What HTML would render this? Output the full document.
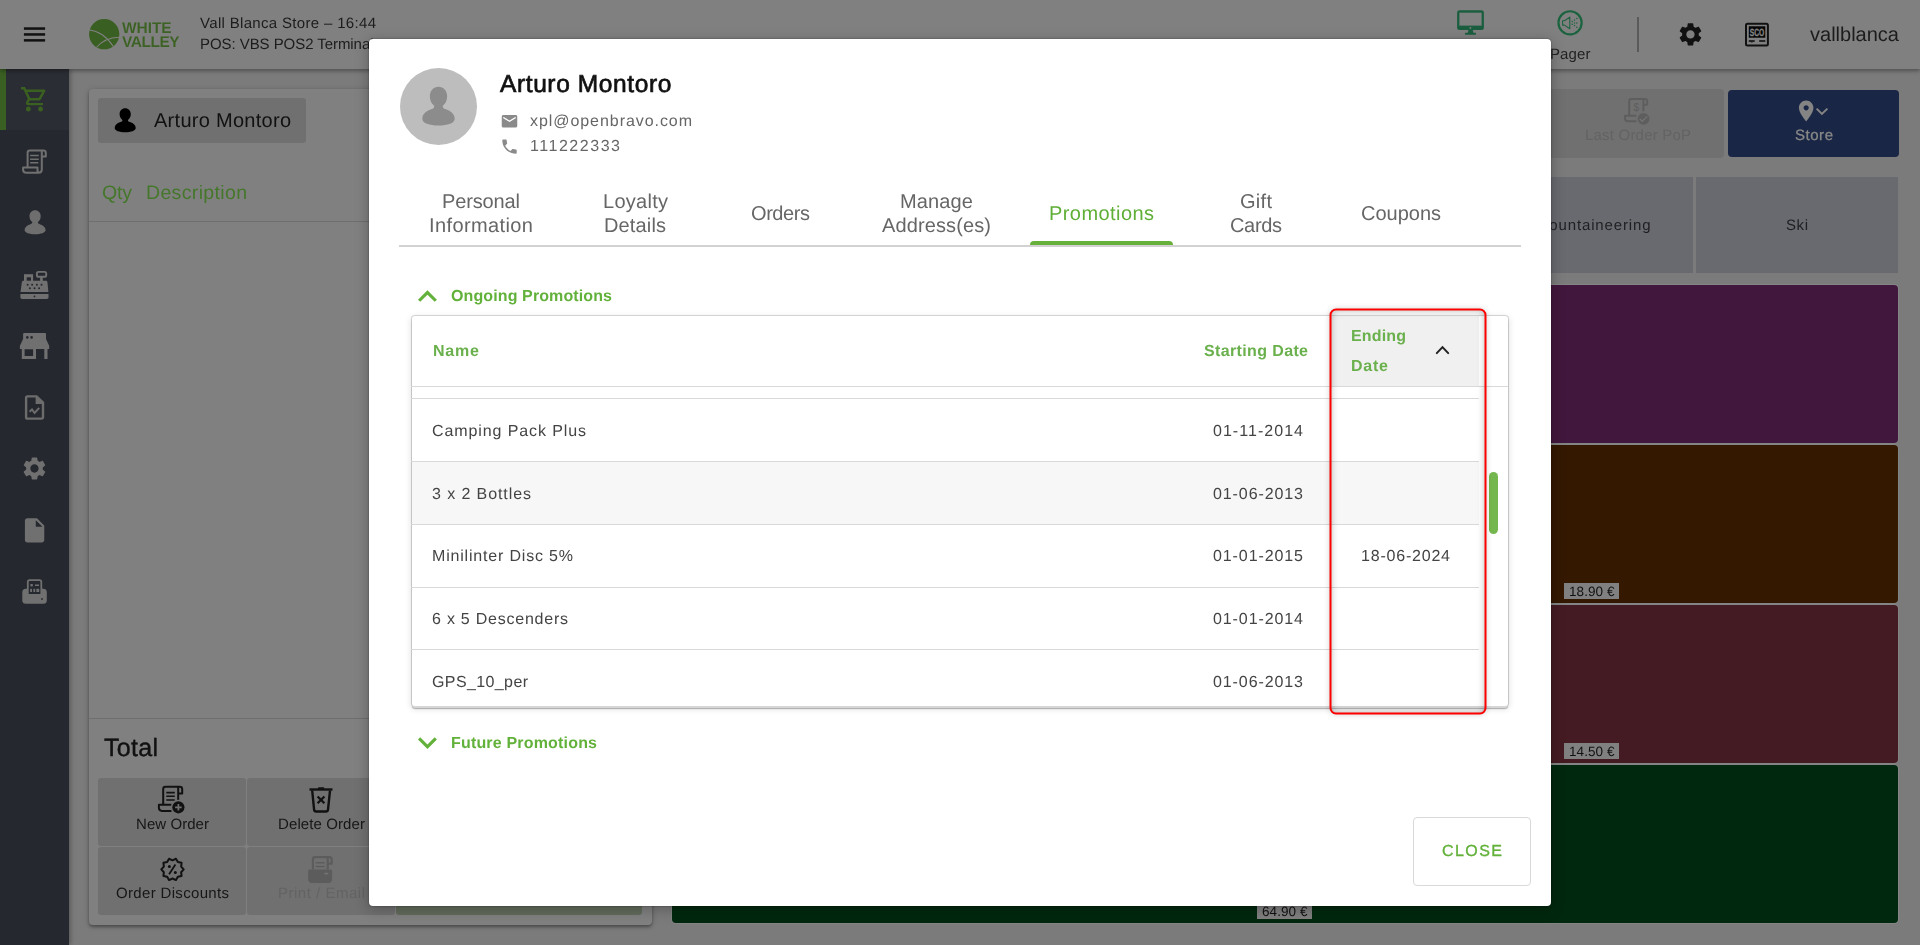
<!DOCTYPE html>
<html lang="en"><head><meta charset="utf-8"><title>POS – Customer Promotions</title>
<style>
*{box-sizing:border-box;margin:0;padding:0}
html,body{width:1920px;height:945px;overflow:hidden;background:#7b7b7b;font-family:"Liberation Sans",sans-serif}
.a{position:absolute}
.t{position:absolute;white-space:nowrap;display:block;text-rendering:geometricPrecision;will-change:transform}
svg{position:absolute;overflow:visible}
#header{left:0;top:0;width:1920px;height:69px;background:#808080;box-shadow:0 2px 4px rgba(0,0,0,.35)}
#side{left:0;top:69px;width:69px;height:876px;background:#25282e;box-shadow:2px 0 4px rgba(0,0,0,.25)}
#side .act{left:0;top:0;width:69px;height:61px;background:#2a2d33}
#side .bar{left:0;top:0;width:6px;height:61px;background:#3a5f22}
#lpanel{left:89px;top:89px;width:563px;height:836px;background:#808080;border-radius:4px;box-shadow:0 2px 3px rgba(0,0,0,.3),0 1px 6px rgba(0,0,0,.18)}
.btn{background:#707070;border-radius:3px}
.hl{background:#6e6e6e;height:1px}
#modal{left:369px;top:39px;width:1182px;height:867px;background:#fff;border-radius:4px;box-shadow:0 0 2px rgba(0,0,0,.45),0 3px 14px 1px rgba(0,0,0,.24)}
.cat{background:#696a70}
.tile{border-radius:4px;box-shadow:0 0 0 1px #838585}
.price{background:#808080;height:16px}
#card{left:412px;top:316px;width:1096px;height:390px;background:#fff;border-radius:3px;box-shadow:0 2px 0 0 #d6d6d6,0 3px 1px 0 rgba(0,0,0,.28),0 0 0 1px rgba(0,0,0,.14),0 2px 6px 1px rgba(0,0,0,.13)}
.rl{background:#d9d9d9;height:1px;left:411px;width:1068px}
#redbox{left:1330px;top:309px;width:156px;height:405px;border-radius:6px;box-shadow:0 0 6px rgba(0,0,0,.2), inset 0 0 8px rgba(0,0,0,.38)}

</style></head>
<body>
<!-- ======= background application (dimmed by modal overlay) ======= -->
<div class="a" id="lpanel"></div>
<div class="a btn" style="left:98px;top:98px;width:208px;height:44.600px"></div>
<div class="a hl" style="left:89px;top:221px;width:563px"></div>
<div class="a hl" style="left:89px;top:718px;width:563px"></div>
<div class="a btn" style="left:98px;top:778px;width:148px;height:68px"></div>
<div class="a btn" style="left:247px;top:778px;width:148px;height:68px"></div>
<div class="a btn" style="left:98px;top:847px;width:148px;height:68px"></div>
<div class="a btn" style="left:247px;top:847px;width:148px;height:68px"></div>
<div class="a" style="left:396px;top:847px;width:246px;height:68px;background:#626b5c;border-radius:3px"></div>

<div class="a btn" style="left:1460px;top:89px;width:264px;height:68.500px;background:#707070;border-radius:4px"></div>
<div class="a" style="left:1728px;top:90px;width:171px;height:67px;background:#1a2645;border-radius:4px"></div>
<div class="a cat" style="left:1400px;top:177px;width:293px;height:96px"></div>
<div class="a cat" style="left:1696px;top:177px;width:202px;height:96px"></div>
<div class="a tile" style="left:672px;top:285px;width:1226px;height:158px;background:#42173d"></div>
<div class="a tile" style="left:672px;top:445px;width:1226px;height:158px;background:#341800"></div>
<div class="a tile" style="left:672px;top:605px;width:1226px;height:158px;background:#451b23"></div>
<div class="a tile" style="left:672px;top:765px;width:1226px;height:158px;background:#00280e"></div>
<div class="a price" style="left:1564px;top:583px;width:55px"></div>
<div class="a price" style="left:1564px;top:743px;width:55px"></div>
<div class="a price" style="left:1257px;top:903px;width:55px"></div>

<div class="a" id="side"><div class="a act"></div><div class="a bar"></div></div>
<div class="a" id="header"></div>
<div class="a" style="left:1637px;top:17px;width:2px;height:35px;background:#5a5a5a"></div>
<svg class="a" style="left:0;top:0" width="1920" height="945" viewBox="0 0 1920 945">
<!-- hamburger -->
<g fill="#101010"><rect x="23.900" y="27.300" width="21.200" height="2.500"/><rect x="23.900" y="33.200" width="21.200" height="2.500"/><rect x="23.900" y="39.100" width="21.200" height="2.500"/></g>
<!-- logo -->
<circle cx="104.200" cy="34.200" r="15.100" fill="#3a5f22"/>
<g fill="none" stroke="#808080" stroke-width="1.100"><path d="M88.800 29.800Q103.500 31.500 113.300 46.500"/><path d="M96.500 47.500Q104.500 37.800 119.300 37.300"/></g>
<!-- sidebar: cart -->
<path transform="translate(19.800 84.600) scale(1.220)" fill="#3b6120" d="M15.550 13c.75 0 1.410-.41 1.750-1.030l3.580-6.490c.37-.66-.11-1.480-.87-1.480H5.210l-.94-2H1v2h2l3.600 7.590-1.350 2.440C4.520 15.370 5.480 17 7 17h12v-2H7l1.100-2h7.450zM6.160 6h12.150l-2.760 5H8.530L6.160 6zM7 18c-1.100 0-1.990.9-1.990 2S5.900 22 7 22s2-.9 2-2-.9-2-2-2zm10 0c-1.100 0-1.990.9-1.990 2s.89 2 1.990 2 2-.9 2-2-.9-2-2-2z"/>
<!-- sidebar: receipt -->
<g fill="none" stroke="#707070" stroke-width="2" stroke-linejoin="round">
<path d="M27.600 167.500V152.700Q27.600 150.500 29.800 150.500H43.400Q45.800 150.500 45.800 152.900V156.500H41.800"/>
<path d="M41.800 150.500V169.600Q41.800 172.800 38.600 172.800H26.300Q23.100 172.800 23.100 169.800V167.500H37.500V170.300Q37.500 172.800 39.600 172.800"/>
</g>
<g stroke="#707070" stroke-width="1.500"><path d="M30.100 155.600H38.800M30.100 159.200H38.800M30.100 162.700H38.300"/></g>
<!-- sidebar: person -->
<path transform="translate(24.600 210.300)" fill="#6e6e6e" d="M10.5 0C13.7 0 16.1 2.5 16.1 5.9C16.1 8.6 14.9 10.6 13.3 11.7C13.2 12.9 13.6 13.4 15.2 13.9C19 15.1 21 17.2 21 19.8C21 22.6 16.3 24 10.5 24C4.700 24 0 22.6 0 19.800C0 17.200 2 15.100 5.800 13.900C7.400 13.400 7.800 12.900 7.700 11.700C6.100 10.600 4.900 8.600 4.900 5.900C4.900 2.500 7.300 0 10.500 0Z"/>
<!-- sidebar: cash register -->
<g fill="#707070">
<path d="M20.400 293.900H48.500V297.200Q48.500 299 46.700 299H22.200Q20.400 299 20.400 297.200Z"/>
<path d="M23.300 280.700H46Q47.200 280.700 47.400 281.900L48.400 292H20.500L21.900 281.900Q22.100 280.700 23.300 280.700Z"/>
<rect x="24" y="274.200" width="9.100" height="7"/>
<rect x="40.100" y="277" width="2.700" height="4.200"/>
</g>
<rect x="36.900" y="271.900" width="9.300" height="4.900" rx="1.600" fill="none" stroke="#707070" stroke-width="1.900"/>
<g fill="#25282e"><rect x="26.700" y="277.300" width="4.300" height="3.400"/>
<circle cx="27.600" cy="284.800" r="1"/><circle cx="32.100" cy="284.800" r="1"/><circle cx="36.900" cy="284.800" r="1"/><circle cx="41.500" cy="284.800" r="1"/>
<circle cx="29.900" cy="288.200" r="1"/><circle cx="34.500" cy="288.200" r="1"/><circle cx="39.100" cy="288.200" r="1"/><circle cx="34.500" cy="296.400" r=".9"/></g>
<!-- sidebar: store -->
<g fill="#707070">
<path d="M24.100 333H45Q46 333 46 334V339.100L49.200 345.700V348.900H19.900V345.700L23.100 339.100V334Q23.100 333 24.100 333Z"/>
<path d="M21.800 348.900H36V359H21.800ZM24.600 349.200V355.900H33.100V349.200Z" fill-rule="evenodd"/>
<rect x="44.300" y="348.900" width="3.200" height="10.100"/>
</g>
<g fill="#25282e"><circle cx="27.300" cy="337.400" r="1.300"/><circle cx="31.600" cy="337.400" r="1.300"/></g>
<!-- sidebar: doc chart -->
<path d="M27.500 396.400H36.400L43 402.700V417Q43 418.600 41.400 418.600H27.500Q26.100 418.600 26.100 417.200V397.800Q26.100 396.400 27.500 396.400Z" fill="none" stroke="#6c6c6c" stroke-width="2.400" stroke-linejoin="round"/>
<path d="M35.600 396V403.900H43.500L44 402.200L37 395.500Z" fill="#6c6c6c"/>
<path d="M29.500 411.700L32 409.400L34.600 413L39.200 407.900" fill="none" stroke="#6c6c6c" stroke-width="2"/>
<!-- sidebar: gear -->
<path transform="translate(20.600 454.650) scale(1.155)" fill="#707070" d="M19.14 12.94c.04-.3.06-.61.06-.94 0-.32-.02-.64-.07-.94l2.030-1.580c.18-.14.23-.41.12-.61l-1.920-3.320c-.12-.22-.37-.29-.59-.22l-2.390.96c-.5-.38-1.030-.7-1.620-.94l-.36-2.540c-.04-.24-.24-.41-.48-.41h-3.840c-.24 0-.43.17-.47.41l-.36 2.540c-.59.24-1.130.57-1.620.94l-2.390-.96c-.22-.08-.47 0-.59.22L2.740 8.870c-.12.21-.08.47.12.61l2.030 1.580c-.05.3-.09.63-.09.94s.02.64.07.94l-2.030 1.580c-.18.140-.23.410-.12.610l1.920 3.320c.12.22.37.29.59.22l2.390-.96c.5.38 1.030.7 1.620.94l.36 2.540c.05.24.24.41.48.41h3.840c.24 0 .44-.17.47-.41l.36-2.540c.59-.24 1.130-.56 1.620-.94l2.390.96c.22.08.47 0 .59-.22l1.920-3.320c.12-.22.070-.47-.12-.61l-2.010-1.580zM12 15.600c-1.980 0-3.600-1.620-3.600-3.600s1.620-3.600 3.600-3.600 3.600 1.620 3.600 3.600-1.620 3.600-3.600 3.600z"/>
<!-- sidebar: file -->
<path transform="translate(20.060 515.900) scale(1.210)" fill="#707070" d="M6 2c-1.100 0-1.990.9-1.990 2L4 20c0 1.100.89 2 1.990 2H18c1.100 0 2-.9 2-2V8l-6-6H6zm7 7V3.500L18.500 9H13z"/>
<!-- sidebar: printer -->
<rect x="22.300" y="588.800" width="24.500" height="15" rx="3.500" fill="#707070"/>
<path d="M27.800 594.100V582Q27.800 580.200 29.600 580.200H39.500Q41.300 580.200 41.300 582V594.100" fill="#25282e" stroke="#707070" stroke-width="1.800"/>
<g fill="#707070"><rect x="30.400" y="584" width="2.400" height="2.400"/><rect x="35" y="584.500" width="4" height="1.500"/><rect x="30.200" y="588.800" width="1.800" height="3.200"/><rect x="33.400" y="588.800" width="1.800" height="3.200"/><rect x="36.400" y="588.800" width="2.800" height="3.200"/></g>
<rect x="41.200" y="598.200" width="1.600" height="1.600" fill="#25282e"/>
<!-- customer button person -->
<path transform="translate(114.700 108.200)" fill="#000" d="M10.5 0C13.7 0 16.1 2.5 16.1 5.9C16.1 8.6 14.9 10.6 13.3 11.7C13.2 12.9 13.6 13.4 15.2 13.9C19 15.1 21 17.2 21 19.8C21 22.6 16.3 24 10.5 24C4.700 24 0 22.6 0 19.800C0 17.200 2 15.100 5.800 13.900C7.400 13.400 7.800 12.900 7.700 11.700C6.100 10.600 4.900 8.600 4.900 5.900C4.900 2.500 7.300 0 10.500 0Z"/>
<!-- new order -->
<g fill="none" stroke="#111" stroke-width="2" stroke-linejoin="round">
<path d="M163.200 804.800V789Q163.200 786.800 165.400 786.800H179.800Q182.200 786.800 182.200 789.200V793.500H178.200"/>
<path d="M178.200 786.800V800.500"/>
<path d="M171.500 810.900H162Q158.900 810.900 158.900 807.800V804.800H171.500"/>
</g>
<g stroke="#111" stroke-width="1.600"><path d="M166.300 792.600H174.800M166.300 796.300H174.800M166.300 800H174.800"/></g>
<circle cx="178.400" cy="807.300" r="7.500" fill="#707070"/><circle cx="178.400" cy="807.300" r="6.100" fill="#111"/>
<path d="M175.100 807.300H181.700M178.400 804V810.600" stroke="#707070" stroke-width="1.700"/>
<!-- delete order -->
<path d="M309.500 789.500H332.500" stroke="#111" stroke-width="2.400"/>
<path d="M317.900 789V788.200Q317.900 787.200 318.900 787.200H323.300Q324.300 787.200 324.300 788.200V789Z" fill="#111"/>
<path d="M312.200 790.500L314.100 809.600Q314.300 811.500 316.200 811.500H325.900Q327.800 811.500 328 809.600L330 790.500" fill="none" stroke="#111" stroke-width="2.400" stroke-linejoin="round"/>
<path d="M317.600 796.500L324.400 803.300M324.400 796.500L317.600 803.300" stroke="#111" stroke-width="2.300"/>
<!-- order discounts -->
<path fill="none" stroke="#111" stroke-width="2" stroke-linejoin="round" d="M183.70 869.40L181.15 872.21L181.56 875.98L177.85 876.76L175.96 880.05L172.50 878.50L169.04 880.05L167.15 876.76L163.44 875.98L163.85 872.21L161.30 869.40L163.85 866.59L163.44 862.82L167.15 862.04L169.04 858.75L172.50 860.30L175.96 858.75L177.85 862.04L181.56 862.82L181.15 866.59Z"/>
<path d="M175.400 864.500L169.100 874.200" stroke="#111" stroke-width="1.800"/>
<circle cx="169.400" cy="866.500" r="1.500" fill="#111"/><circle cx="175.300" cy="872.500" r="1.500" fill="#111"/>
<!-- print/email (disabled) -->
<g fill="none" stroke="#5c5c5c" stroke-width="2.200" stroke-linejoin="round">
<path d="M312.900 869.600V859.300Q312.900 857.100 315.100 857.100H329.300Q331.700 857.100 331.700 859.500V863.700H327.700M327.700 857.100V869.600"/>
</g>
<path d="M315.600 862.800H324.700M315.600 866.500H324.700" stroke="#5c5c5c" stroke-width="1.600"/>
<path d="M309.700 869.600H330.600Q332.100 869.600 332.100 871.100V880.200L330 882.900H310.300L308.200 880.200V871.100Q308.200 869.600 309.700 869.600Z" fill="#5c5c5c"/>
<rect x="324.100" y="872.800" width="4.400" height="1.600" rx=".8" fill="#727272"/>
<!-- header monitor -->
<rect x="1457.100" y="10.200" width="26.800" height="19.800" rx="2.500" fill="#1b5e3f"/>
<rect x="1459.400" y="12.700" width="22.200" height="12.900" fill="#808080"/>
<circle cx="1470.400" cy="27.900" r=".9" fill="#808080"/>
<path d="M1468.300 30H1472.900L1473.300 32.800H1475.200Q1476.100 32.800 1476.100 33.700Q1476.100 34.700 1475.200 34.700H1465.800Q1464.900 34.700 1464.900 33.700Q1464.900 32.800 1465.800 32.800H1467.900Z" fill="#1b5e3f"/>
<!-- pager -->
<circle cx="1570.050" cy="22.850" r="11.600" fill="none" stroke="#1b633f" stroke-width="2.200"/>
<path d="M1562.600 20.800H1564.500L1569.800 17.100V28.800L1564.500 25.100H1562.600Z" fill="none" stroke="#1b633f" stroke-width="1.100" stroke-linejoin="round"/>
<g fill="#1b633f"><circle cx="1572.200" cy="21.500" r=".75"/><circle cx="1572.200" cy="24.300" r=".75"/><circle cx="1574.500" cy="20.100" r=".75"/><circle cx="1574.500" cy="22.900" r=".75"/><circle cx="1574.500" cy="25.600" r=".75"/><circle cx="1576.800" cy="18.600" r=".75"/><circle cx="1576.800" cy="22.900" r=".75"/><circle cx="1576.800" cy="27.300" r=".75"/></g>
<!-- header gear -->
<path transform="translate(1676.600 20.550) scale(1.155)" fill="#111" d="M19.14 12.94c.04-.3.06-.61.06-.94 0-.32-.02-.64-.07-.94l2.030-1.580c.18-.14.23-.41.12-.61l-1.920-3.320c-.12-.22-.37-.29-.59-.22l-2.390.96c-.5-.38-1.030-.7-1.620-.94l-.36-2.540c-.04-.24-.24-.41-.48-.41h-3.840c-.24 0-.43.17-.47.41l-.36 2.540c-.59.24-1.130.57-1.620.94l-2.390-.96c-.22-.08-.47 0-.59.22L2.740 8.870c-.12.21-.08.47.12.61l2.030 1.580c-.05.3-.09.63-.09.94s.02.64.07.94l-2.030 1.580c-.18.140-.23.410-.12.610l1.920 3.320c.12.22.37.29.59.22l2.390-.96c.5.38 1.030.7 1.620.94l.36 2.540c.05.24.24.41.48.41h3.840c.24 0 .44-.17.47-.41l.36-2.540c.59-.24 1.130-.56 1.620-.94l2.390.96c.22.08.47 0 .59-.22l1.920-3.320c.12-.22.070-.47-.12-.61l-2.010-1.580zM12 15.600c-1.980 0-3.600-1.620-3.600-3.600s1.620-3.600 3.600-3.600 3.600 1.620 3.600 3.600-1.620 3.600-3.600 3.600z"/>
<!-- SCO -->
<rect x="1746" y="23.700" width="21.900" height="21.700" rx="1.500" fill="none" stroke="#111" stroke-width="2"/>
<rect x="1748.800" y="26.300" width="16.500" height="11.400" fill="#050505"/>
<text x="1757.050" y="35.700" text-anchor="middle" font-family="Liberation Sans, sans-serif" font-weight="700" font-size="10.500" textLength="14.600" lengthAdjust="spacingAndGlyphs" fill="#858585" stroke="#858585" stroke-width=".350" style="text-rendering:geometricPrecision">SCO</text>
<rect x="1748.800" y="40.200" width="5.900" height="1.600" fill="#111"/><rect x="1759.200" y="40.200" width="6.100" height="1.600" fill="#111"/>
<path d="M1750 41.800Q1751.800 43.200 1753.500 41.800Z" fill="#111"/>
<!-- last order pop (disabled) -->
<g fill="none" stroke="#5e5e5e" stroke-width="2" stroke-linejoin="round">
<path d="M1629.200 115.800V101.100Q1629.200 98.900 1631.400 98.900H1644.800Q1647.200 98.900 1647.200 101.300V104.800H1643.400M1643.400 98.900V111.500"/>
<path d="M1636.500 121.300H1628Q1625 121.300 1625 118.300V115.800H1636.500"/>
</g>
<text x="1636.200" y="110.600" text-anchor="middle" font-family="Liberation Sans, sans-serif" font-size="10" fill="#5e5e5e">$</text>
<circle cx="1643.600" cy="118.800" r="7.200" fill="#707070"/><circle cx="1643.600" cy="118.800" r="5.900" fill="#5e5e5e"/>
<path d="M1639.800 119L1642.300 121.300L1647.200 116.400" fill="none" stroke="#737373" stroke-width="1.300"/>
<!-- store pin -->
<path transform="translate(1793.700 98.500) scale(1.040)" fill="#848484" d="M12 2C8.130 2 5 5.130 5 9c0 5.250 7 13 7 13s7-7.750 7-13c0-3.870-3.130-7-7-7zm0 9.500c-1.380 0-2.500-1.120-2.500-2.500s1.120-2.500 2.500-2.500 2.500 1.120 2.500 2.500-1.120 2.500-2.500 2.500z"/>
<path d="M1816.600 108.600L1821.900 113.900L1827.400 108.600" fill="none" stroke="#848484" stroke-width="2"/>
</svg>

<span class="t" style="left:199.5px;top:14.5px;font-size:15px;line-height:18px;font-weight:400;color:#1c1c1c;letter-spacing:0.326px;">Vall Blanca Store – 16:44</span>
<span class="t" style="left:199.5px;top:36.0px;font-size:15px;line-height:18px;font-weight:400;color:#1c1c1c;letter-spacing:-0.062px;">POS: VBS POS2 Terminal</span>
<span class="t" style="left:1549.5px;top:45.7px;font-size:15px;line-height:18px;font-weight:400;color:#222;letter-spacing:0.117px;">Pager</span>
<span class="t" style="left:1809.5px;top:23.0px;font-size:20px;line-height:24px;font-weight:400;color:#1c1c1c;letter-spacing:0.005px;">vallblanca</span>
<span class="t" style="left:122.0px;top:18.9px;font-size:15.5px;line-height:19px;font-weight:700;color:#3b6123;letter-spacing:-0.059px;-webkit-text-stroke:0.12px #808080;">WHITE</span>
<span class="t" style="left:122.0px;top:32.9px;font-size:15.5px;line-height:19px;font-weight:700;color:#3b6123;letter-spacing:-0.460px;-webkit-text-stroke:0.12px #808080;">VALLEY</span>
<span class="t" style="left:153.5px;top:109.0px;font-size:20px;line-height:24px;font-weight:400;color:#111;letter-spacing:0.278px;">Arturo Montoro</span>
<span class="t" style="left:101.5px;top:181.5px;font-size:19.5px;line-height:23px;font-weight:400;color:#45772b;letter-spacing:-0.172px;">Qty</span>
<span class="t" style="left:145.5px;top:181.5px;font-size:19.5px;line-height:23px;font-weight:400;color:#45772b;letter-spacing:0.345px;">Description</span>
<span class="t" style="left:103.5px;top:733.0px;font-size:25px;line-height:30px;font-weight:400;color:#111;letter-spacing:0.297px;-webkit-text-stroke:0.4px #111;">Total</span>
<span class="t" style="left:135.5px;top:816.0px;font-size:15px;line-height:18px;font-weight:400;color:#161616;letter-spacing:0.059px;">New Order</span>
<span class="t" style="left:277.5px;top:816.0px;font-size:15px;line-height:18px;font-weight:400;color:#161616;letter-spacing:0.102px;">Delete Order</span>
<span class="t" style="left:115.5px;top:885.0px;font-size:15px;line-height:18px;font-weight:400;color:#161616;letter-spacing:0.330px;">Order Discounts</span>
<span class="t" style="left:277.5px;top:885.0px;font-size:15px;line-height:18px;font-weight:400;color:#636363;letter-spacing:0.512px;">Print / Email</span>
<span class="t" style="left:1584.5px;top:126.5px;font-size:15px;line-height:18px;font-weight:400;color:#636363;letter-spacing:0.201px;">Last Order PoP</span>
<span class="t" style="left:1794.5px;top:126.5px;font-size:15px;line-height:18px;font-weight:400;color:#888;letter-spacing:0.535px;-webkit-text-stroke:0.3px #888;">Store</span>
<span class="t" style="left:1535.5px;top:216.5px;font-size:15px;line-height:18px;font-weight:400;color:#1f1f22;letter-spacing:0.853px;">Mountaineering</span>
<span class="t" style="left:1785.5px;top:216.5px;font-size:15px;line-height:18px;font-weight:400;color:#1f1f22;letter-spacing:0.578px;">Ski</span>
<span class="t" style="left:1569.0px;top:584.0px;font-size:13.5px;line-height:16px;font-weight:400;color:#111;letter-spacing:0.076px;">18.90 €</span>
<span class="t" style="left:1569.0px;top:744.0px;font-size:13.5px;line-height:16px;font-weight:400;color:#111;letter-spacing:0.076px;">14.50 €</span>
<span class="t" style="left:1262.0px;top:904.0px;font-size:13.5px;line-height:16px;font-weight:400;color:#111;letter-spacing:0.076px;">64.90 €</span>

<!-- ======= customer modal ======= -->
<div class="a" id="modal"></div>
<div class="a" style="left:400px;top:68px;width:77px;height:77px;border-radius:50%;background:#bdbdbd"></div>
<div class="a" style="left:399px;top:245px;width:1122px;height:2px;background:#d2d2d2"></div>
<div class="a" style="left:1030px;top:241px;width:143px;height:4px;background:#68b03c;border-radius:4px 4px 0 0"></div>
<div class="a" id="card"></div>
<div class="a" style="left:1331px;top:316px;width:148px;height:70px;background:#f0f0f0"></div>
<div class="a" style="left:412px;top:462px;width:1067px;height:62px;background:#f7f7f7"></div>
<div class="a rl" style="top:386px;width:1097px"></div>
<div class="a rl" style="top:398px"></div>
<div class="a rl" style="top:461px"></div>
<div class="a rl" style="top:524px"></div>
<div class="a rl" style="top:587px"></div>
<div class="a rl" style="top:649px"></div>
<div class="a" style="left:1489px;top:471.500px;width:9px;height:62px;background:#75b74f;border-radius:4.500px"></div>
<div class="a" id="redbox"></div>
<svg class="a" style="left:0;top:0" width="1920" height="945"><rect x="1330.5" y="309.5" width="155" height="404" rx="5.5" fill="none" stroke="#ff0000" stroke-width="2"/></svg>
<div class="a" style="left:1413px;top:817px;width:118px;height:69px;border:1px solid #d9d9d9;border-radius:4px;background:#fff"></div>
<svg class="a" style="left:0;top:0" width="1920" height="945" viewBox="0 0 1920 945">
<!-- avatar silhouette -->
<path transform="translate(422.300 86.800) scale(1.543 1.612)" fill="#8c8c8c" d="M10.5 0C13.700 0 16.100 2.500 16.100 5.900C16.100 8.600 14.900 10.600 13.300 11.700C13.200 12.900 13.600 13.400 15.200 13.900C19 15.100 21 17.200 21 19.800C21 22.600 16.300 24 10.500 24C4.700 24 0 22.600 0 19.800C0 17.200 2 15.100 5.800 13.900C7.400 13.400 7.800 12.900 7.700 11.700C6.100 10.600 4.900 8.600 4.900 5.900C4.900 2.500 7.300 0 10.500 0Z"/>
<!-- mail -->
<path transform="translate(500.200 112) scale(.775)" fill="#8a8a8a" d="M20 4H4c-1.100 0-1.990.9-1.990 2L2 18c0 1.100.9 2 2 2h16c1.100 0 2-.9 2-2V6c0-1.100-.9-2-2-2zm0 4l-8 5-8-5V6l8 5 8-5v2z"/>
<!-- phone -->
<path transform="translate(499.900 137) scale(.800)" fill="#8a8a8a" d="M6.620 10.790c1.440 2.830 3.760 5.140 6.590 6.590l2.200-2.200c.27-.27.670-.36 1.020-.24 1.120.37 2.330.57 3.570.57.550 0 1 .45 1 1V20c0 .55-.45 1-1 1-9.390 0-17-7.610-17-17 0-.55.450-1 1-1h3.500c.55 0 1 .45 1 1 0 1.250.2 2.450.57 3.570.11.350.03.740-.25 1.020l-2.200 2.200z"/>
<!-- section chevrons -->
<path transform="translate(408.550 277.600) scale(1.575)" fill="#62b13a" d="M12 8l-6 6 1.410 1.410L12 10.830l4.590 4.580L18 14z"/>
<path transform="translate(408.550 723.700) scale(1.575)" fill="#62b13a" d="M16.590 8.590L12 13.170 7.410 8.590 6 10l6 6 6-6z"/>
<!-- sort chevron -->
<path d="M1436.800 353.100L1442.500 347.100L1448.200 353.100" fill="none" stroke="#222" stroke-width="2" stroke-linecap="round" stroke-linejoin="miter"/>
</svg>

<span class="t" style="left:500.2px;top:69.8px;font-size:24.5px;line-height:29px;font-weight:400;color:#111;letter-spacing:0.607px;-webkit-text-stroke:0.7px #111;">Arturo Montoro</span>
<span class="t" style="left:529.5px;top:111.5px;font-size:16px;line-height:19px;font-weight:400;color:#666;letter-spacing:0.938px;">xpl@openbravo.com</span>
<span class="t" style="left:529.5px;top:136.5px;font-size:16px;line-height:19px;font-weight:400;color:#666;letter-spacing:1.535px;">111222333</span>
<span class="t" style="left:441.5px;top:190.0px;font-size:20px;line-height:24px;font-weight:400;color:#666;letter-spacing:-0.134px;">Personal</span>
<span class="t" style="left:428.5px;top:214.0px;font-size:20px;line-height:24px;font-weight:400;color:#666;letter-spacing:0.394px;">Information</span>
<span class="t" style="left:602.5px;top:190.0px;font-size:20px;line-height:24px;font-weight:400;color:#666;letter-spacing:0.271px;">Loyalty</span>
<span class="t" style="left:603.5px;top:214.0px;font-size:20px;line-height:24px;font-weight:400;color:#666;letter-spacing:0.143px;">Details</span>
<span class="t" style="left:750.5px;top:202.0px;font-size:20px;line-height:24px;font-weight:400;color:#666;letter-spacing:-0.425px;">Orders</span>
<span class="t" style="left:899.5px;top:190.0px;font-size:20px;line-height:24px;font-weight:400;color:#666;letter-spacing:0.144px;">Manage</span>
<span class="t" style="left:881.5px;top:214.0px;font-size:20px;line-height:24px;font-weight:400;color:#666;letter-spacing:0.119px;">Address(es)</span>
<span class="t" style="left:1048.5px;top:202.0px;font-size:20px;line-height:24px;font-weight:400;color:#5fae36;letter-spacing:0.427px;">Promotions</span>
<span class="t" style="left:1239.5px;top:190.0px;font-size:20px;line-height:24px;font-weight:400;color:#666;letter-spacing:0.292px;">Gift</span>
<span class="t" style="left:1229.5px;top:214.0px;font-size:20px;line-height:24px;font-weight:400;color:#666;letter-spacing:-0.340px;">Cards</span>
<span class="t" style="left:1360.5px;top:202.0px;font-size:20px;line-height:24px;font-weight:400;color:#666;letter-spacing:-0.010px;">Coupons</span>
<span class="t" style="left:450.5px;top:286.5px;font-size:16px;line-height:19px;font-weight:700;color:#62b13a;letter-spacing:0.112px;">Ongoing Promotions</span>
<span class="t" style="left:450.5px;top:733.5px;font-size:16px;line-height:19px;font-weight:700;color:#62b13a;letter-spacing:0.181px;">Future Promotions</span>
<span class="t" style="left:432.5px;top:341.5px;font-size:16px;line-height:19px;font-weight:700;color:#6ab04c;letter-spacing:0.807px;">Name</span>
<span class="t" style="left:1203.5px;top:341.5px;font-size:16px;line-height:19px;font-weight:700;color:#6ab04c;letter-spacing:0.368px;">Starting Date</span>
<span class="t" style="left:1350.5px;top:326.5px;font-size:16px;line-height:19px;font-weight:700;color:#6ab04c;letter-spacing:0.156px;">Ending</span>
<span class="t" style="left:1350.5px;top:356.5px;font-size:16px;line-height:19px;font-weight:700;color:#6ab04c;letter-spacing:0.771px;">Date</span>
<span class="t" style="left:431.5px;top:421.5px;font-size:16px;line-height:19px;font-weight:400;color:#444;letter-spacing:0.898px;">Camping Pack Plus</span>
<span class="t" style="left:1212.5px;top:421.5px;font-size:16px;line-height:19px;font-weight:400;color:#444;letter-spacing:1.038px;">01-11-2014</span>
<span class="t" style="left:431.5px;top:484.5px;font-size:16px;line-height:19px;font-weight:400;color:#444;letter-spacing:0.913px;">3 x 2 Bottles</span>
<span class="t" style="left:1212.5px;top:484.5px;font-size:16px;line-height:19px;font-weight:400;color:#444;letter-spacing:0.906px;">01-06-2013</span>
<span class="t" style="left:431.5px;top:546.5px;font-size:16px;line-height:19px;font-weight:400;color:#444;letter-spacing:0.815px;">Minilinter Disc 5%</span>
<span class="t" style="left:1212.5px;top:546.5px;font-size:16px;line-height:19px;font-weight:400;color:#444;letter-spacing:0.906px;">01-01-2015</span>
<span class="t" style="left:1360.5px;top:546.5px;font-size:16px;line-height:19px;font-weight:400;color:#444;letter-spacing:0.795px;">18-06-2024</span>
<span class="t" style="left:431.5px;top:609.5px;font-size:16px;line-height:19px;font-weight:400;color:#444;letter-spacing:0.766px;">6 x 5 Descenders</span>
<span class="t" style="left:1212.5px;top:609.5px;font-size:16px;line-height:19px;font-weight:400;color:#444;letter-spacing:0.906px;">01-01-2014</span>
<span class="t" style="left:431.5px;top:672.5px;font-size:16px;line-height:19px;font-weight:400;color:#444;letter-spacing:0.387px;">GPS_10_per</span>
<span class="t" style="left:1212.5px;top:672.5px;font-size:16px;line-height:19px;font-weight:400;color:#444;letter-spacing:0.906px;">01-06-2013</span>
<span class="t" style="left:1441.5px;top:842.0px;font-size:16px;line-height:19px;font-weight:400;color:#62b13a;letter-spacing:1.438px;-webkit-text-stroke:0.35px #62b13a;">CLOSE</span>

</body></html>
